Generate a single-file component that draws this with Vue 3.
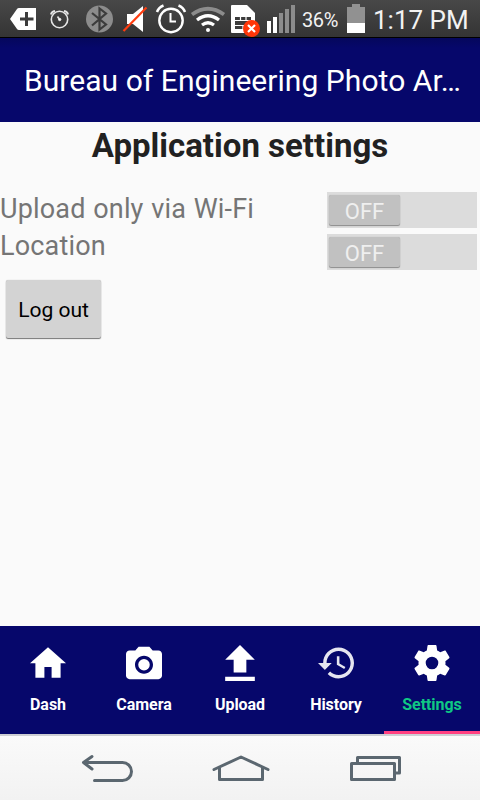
<script setup>
import { ref } from 'vue'

const settings = ref([
  { label: 'Upload only via Wi-Fi', on: false },
  { label: 'Location', on: false },
])

const tabs = [
  { name: 'Dash', box: '2 1.8 20 20', path: 'M10 20v-6h4v6h5v-8h3L12 3 2 12h3v8z' },
  {
    name: 'Camera',
    box: '2 1 20 20',
    path: 'M9 2 7.17 4H4c-1.1 0-2 .9-2 2v12c0 1.1.9 2 2 2h16c1.1 0 2-.9 2-2V6c0-1.1-.9-2-2-2h-3.17L15 2H9zm3 15c-2.76 0-5-2.24-5-5s2.24-5 5-5 5 2.24 5 5-2.24 5-5 5zm0-1.8a3.2 3.2 0 1 0 0-6.4 3.2 3.2 0 0 0 0 6.4z',
  },
  { name: 'Upload', box: '3.5 3 17 17', path: 'M9 16h6v-6h4l-7-7-7 7h4zM5 18h14v2H5z' },
  {
    name: 'History',
    box: '1 1.5 21 21',
    dim: true,
    path: 'M13 3c-4.97 0-9 4.03-9 9H1l3.89 3.89.07.14L9 12H6c0-3.87 3.13-7 7-7s7 3.13 7 7-3.13 7-7 7c-1.93 0-3.68-.79-4.94-2.06l-1.42 1.42C8.27 19.99 10.51 21 13 21c4.97 0 9-4.03 9-9s-4.03-9-9-9zm-1 5v5l4.28 2.54.72-1.21-3.5-2.08V8H12z',
  },
  {
    name: 'Settings',
    box: '2 2 20 20',
    path: 'M19.43 12.98c.04-.32.07-.64.07-.98s-.03-.66-.07-.98l2.11-1.65c.19-.15.24-.42.12-.64l-2-3.46c-.12-.22-.39-.3-.61-.22l-2.49 1c-.52-.4-1.08-.73-1.69-.98l-.38-2.65C14.46 2.18 14.25 2 14 2h-4c-.25 0-.46.18-.49.42l-.38 2.65c-.61.25-1.17.59-1.69.98l-2.49-1c-.23-.09-.49 0-.61.22l-2 3.46c-.13.22-.07.49.12.64l2.11 1.65c-.04.32-.07.65-.07.98s.03.66.07.98l-2.11 1.65c-.19.15-.24.42-.12.64l2 3.46c.12.22.39.3.61.22l2.49-1c.52.4 1.08.73 1.69.98l.38 2.65c.03.24.24.42.49.42h4c.25 0 .46-.18.49-.42l.38-2.65c.61-.25 1.17-.59 1.69-.98l2.49 1c.23.09.49 0 .61-.22l2-3.46c.12-.22.07-.49-.12-.64l-2.11-1.65zM12 15.5a3.5 3.5 0 1 1 0-7 3.5 3.5 0 0 1 0 7z',
  },
]
const active = ref('Settings')
</script>

<template>
  <div class="screen">
    <header class="status">
      <svg width="48" height="37" viewBox="0 0 48 37">
        <path d="M10 19 17 9q.6-1 2-1h17v22H19q-1.400 0-2-1z" fill="#fff" />
        <path d="M20 19h13.500M26.500 12v14" stroke="#3c3c3c" stroke-width="3" />
      </svg>
      <svg width="24" height="37" viewBox="48 0 24 37" fill="none" stroke="#e6e6e6">
        <circle cx="59.500" cy="19.500" r="8.200" stroke-width="1.600" />
        <path d="M51 14.500q.5-3 4-3.500M68 14.500q-.5-3-4-3.500" stroke-width="2" />
        <path d="m57.500 16.500 2 3" stroke-width="1.600" />
        <circle cx="59.700" cy="19.500" r="1.200" fill="#fff" />
      </svg>
      <svg width="48" height="37" viewBox="72 0 48 37">
        <circle cx="99.500" cy="19" r="13.500" fill="#8c8c8c" />
        <path d="m92 13 14 11.500-6.500 5v-21l6.500 5L92 25.500" fill="none" stroke="#3c3c3c" stroke-width="2.200" />
      </svg>
      <svg width="32" height="37" viewBox="120 0 32 37">
        <path d="M127 14h6l10-8v26l-10-8h-6z" fill="#fff" />
        <path d="M123.500 31 146.500 7.500" stroke="#ff3d10" stroke-width="2.200" />
      </svg>
      <svg width="38" height="37" viewBox="152 0 38 37" fill="none" stroke="#fff">
        <circle cx="171" cy="20.500" r="11.700" stroke-width="2.400" />
        <path d="M157 12q1.500-4.500 6.500-6.500M185 12q-1.500-4.500-6.500-6.500" stroke-width="2.500" />
        <path d="M170.500 13v8.500h5.500" stroke-width="2" />
      </svg>
      <svg width="36" height="37" viewBox="190 0 36 37" fill="none" stroke="#fff" stroke-width="3.300">
        <path d="M192 14.500q16-11.500 32 0" stroke="#8c8c8c" stroke-width="3.800" />
        <path d="M197 20q11-8.500 22 0M202 25q6-4.500 12 0" />
        <circle cx="208" cy="30" r="2" fill="#fff" stroke="none" />
      </svg>
      <svg width="38" height="37" viewBox="226 0 38 37">
        <path d="M231 6q0-1 1-1h15l8 8v19q0 1-1 1h-22q-1 0-1-1z" fill="#fff" />
        <path d="M235 17h16v12h-16z" fill="#3c3c3c" />
        <path d="M235 20.500h16M235 25.500h16M240.500 17v3.500M246 17v3.500M243 25v4" stroke="#fff" stroke-width="1.200" />
        <circle cx="251.500" cy="28.500" r="8.500" fill="#ff3608" />
        <path d="m248 25 7 7m0-7-7 7" stroke="#fff" stroke-width="2.200" />
      </svg>
      <svg width="38" height="37" viewBox="264 0 38 37">
        <path d="M267 21h4v12h-4zM273 17h4v16h-4z" fill="#fff" />
        <path d="M279 13h4v20h-4zM285 9h4v24h-4zM291 5h4v28h-4z" fill="#8c8c8c" />
      </svg>
      <span class="percent">36%</span>
      <svg class="battery" width="18" height="37" viewBox="347 0 18 37">
        <path d="M347 7h5V4h8v3h5v16h-18z" fill="#919191" />
        <path d="M347 23h18v10h-18z" fill="#fff" />
      </svg>
      <time class="clock">1:17 PM</time>
    </header>

    <div class="appbar"><span class="apptitle">Bureau of Engineering Photo Ar…</span></div>

    <main class="content">
      <h1><span>Application settings</span></h1>
      <section class="settings">
        <div class="labels">
          <div v-for="s in settings" :key="s.label" class="label">{{ s.label }}</div>
        </div>
        <div class="switches">
          <div v-for="s in settings" :key="s.label" class="switch" @click="s.on = !s.on">
            <div class="thumb">{{ s.on ? 'ON' : 'OFF' }}</div>
          </div>
        </div>
      </section>
      <button class="logout">Log out</button>
    </main>

    <nav class="tabs">
      <div v-for="t in tabs" :key="t.name" class="tab" :class="{ active: t.name === active }" @click="active = t.name">
        <svg width="36" height="36" :viewBox="t.box" :class="{ dim: t.dim }"><path :d="t.path" fill="#fff" /></svg>
        <span>{{ t.name }}</span>
      </div>
    </nav>

    <footer class="navbar">
      <svg width="160" height="64" viewBox="0 736 160 64">
        <path d="M84 762.500h38.500a9 9 0 0 1 0 18H94.500M92 756.500l-8.500 6 8.500 6.500" />
      </svg>
      <svg width="160" height="64" viewBox="160 736 160 64">
        <path d="m214 769.500 27-12.500 27 12.500M219.500 768v11.500h43V768" />
      </svg>
      <svg width="160" height="64" viewBox="320 736 160 64">
        <path d="M357.500 763v-5.500h42v15.500H395M351.500 763.500h43v16h-43z" />
      </svg>
    </footer>
  </div>
</template>

<style>
body {
  margin: 0;
}
</style>

<style scoped>
.screen {
  width: 480px;
  height: 800px;
  display: flex;
  flex-direction: column;
  overflow: hidden;
  background: #fafafa;
  font-family: Roboto, sans-serif;
}
svg {
  display: block;
  flex: none;
}
.status {
  height: 37px;
  flex: none;
  display: flex;
  background: linear-gradient(#484848, #343434);
  border-bottom: 1px solid #000;
  color: #f2f2f2;
  white-space: nowrap;
}
.percent {
  width: 45px;
  font-size: 20px;
  line-height: 40px;
  letter-spacing: -0.4px;
}
.clock {
  margin-left: 8px;
  font-size: 26px;
  line-height: 40px;
}
.appbar {
  height: 84px;
  flex: none;
  box-sizing: border-box;
  padding-left: 24px;
  background: linear-gradient(#05075c, #06076b 10px);
  color: #fff;
  font-size: 30px;
  line-height: 85px;
  letter-spacing: 0.05px;
  white-space: nowrap;
}
.content {
  flex: 1;
}
h1 {
  margin: 0;
  height: 68px;
  text-align: center;
  font-size: 33px;
  line-height: 47px;
  color: #212121;
}
.settings {
  display: flex;
  justify-content: space-between;
  padding-right: 3px;
}
.labels {
  padding-top: 1px;
}
.label {
  height: 37px;
  line-height: 37px;
  font-size: 27px;
  letter-spacing: 0.17px;
  word-spacing: 0.8px;
  color: #757575;
}
.switches {
  display: flex;
  flex-direction: column;
  gap: 6px;
  padding-top: 2px;
}
.switch {
  width: 150px;
  height: 36px;
  box-sizing: border-box;
  padding: 3px 2px;
  background: #dcdcdc;
}
.thumb {
  width: 71px;
  height: 30px;
  border-radius: 2px;
  background: #c1c1c1;
  box-shadow: 0 1px 1px #8c8c8c, 0 0 1px #aaa;
  color: #efefef;
  font-size: 22px;
  line-height: 34px;
  text-align: center;
}
.logout {
  display: block;
  width: 95px;
  height: 58px;
  margin: 10px 0 0 6px;
  padding: 2px 0 0;
  border: 0;
  border-radius: 2px;
  background: #d3d3d3;
  box-shadow: 0 1px 1px #777, 0 0 1px #bbb;
  color: #000;
  font-family: inherit;
  font-size: 21px;
}
.tabs {
  height: 108px;
  flex: none;
  display: flex;
  background: #06076b;
  border-bottom: 2px solid #cdced3;
}
.tab {
  flex: 1;
  box-sizing: border-box;
  padding-top: 19px;
  display: flex;
  flex-direction: column;
  align-items: center;
  color: #fff;
  font-size: 16px;
  font-weight: 700;
  line-height: 20px;
}
.tab span {
  margin-top: 14px;
  letter-spacing: -0.05px;
}
.tab.active {
  border-bottom: 3px solid #ff4081;
  color: #0fc884;
}
.dim {
  opacity: 0.9;
}
.navbar {
  height: 64px;
  flex: none;
  display: flex;
  background: linear-gradient(#fafafa, #f2f2f2);
}
.navbar path {
  fill: none;
  stroke: #5b6770;
  stroke-width: 3;
  stroke-linecap: round;
  stroke-linejoin: round;
}
</style>
